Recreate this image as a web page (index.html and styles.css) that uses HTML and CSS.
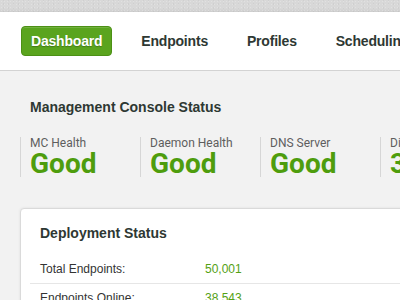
FILE: index.html
```html
<!DOCTYPE html>
<html>
<head>
<meta charset="utf-8">
<link rel="stylesheet" href="styles.css">
</head>
<body>
<div class="page">
  <div class="topband"></div>
  <nav class="nav">
    <a class="nav-item active">Dashboard</a>
    <a class="nav-item">Endpoints</a>
    <a class="nav-item">Profiles</a>
    <a class="nav-item">Scheduling</a>
    <a class="nav-item">Reports</a>
  </nav>
  <main class="main">
    <h2 class="section-title">Management Console Status</h2>
    <div class="stats">
      <div class="stat"><div class="stat-label">MC Health</div><div class="stat-value">Good</div></div>
      <div class="stat"><div class="stat-label">Daemon Health</div><div class="stat-value">Good</div></div>
      <div class="stat"><div class="stat-label">DNS Server</div><div class="stat-value">Good</div></div>
      <div class="stat"><div class="stat-label">Disk Usage</div><div class="stat-value">34%</div></div>
    </div>
    <section class="card">
      <h3 class="card-title">Deployment Status</h3>
      <div class="rows">
        <div class="row"><span class="row-label">Total Endpoints:</span><span class="row-value">50,001</span></div>
        <div class="row"><span class="row-label">Endpoints Online:</span><span class="row-value">38,543</span></div>
        <div class="row"><span class="row-label">Endpoints Offline:</span><span class="row-value">11,458</span></div>
      </div>
    </section>
  </main>
</div>
</body>
</html>
```
FILE: styles.css
```css
html, body {
  margin: 0;
  padding: 0;
}
body {
  width: 400px;
  height: 300px;
  overflow: hidden;
  background: #f2f2f2;
  font-family: "Liberation Sans", Arial, sans-serif;
}
.page {
  width: 400px;
  overflow: hidden;
}
.topband {
  height: 12px;
  background-color: #d8d8d8;
  background-image:
    radial-gradient(rgba(255,255,255,0.22) 0.6px, transparent 0.8px),
    radial-gradient(rgba(0,0,0,0.05) 0.6px, transparent 0.8px),
    linear-gradient(to bottom, rgba(0,0,0,0) 70%, rgba(0,0,0,0.05));
  background-size: 3px 3px, 5px 4px, 100% 100%;
  background-position: 0 0, 1px 2px, 0 0;
}
.nav {
  height: 58px;
  background: #ffffff;
  border-bottom: 1px solid #d3d3d3;
  display: flex;
  align-items: center;
  gap: 19px;
  padding-left: 21px;
  white-space: nowrap;
}
.nav-item {
  font-size: 14px;
  font-weight: bold;
  letter-spacing: -0.2px;
  color: #2e3833;
  padding: 0 10px;
  height: 30px;
  line-height: 30px;
  flex: none;
}
.nav-item.active {
  background: #5aa41e;
  border: 1px solid #4c9015;
  border-radius: 4px;
  color: #ffffff;
  height: 28px;
  line-height: 28px;
  padding: 0 9px;
  text-shadow: 0 1px 1px rgba(0,0,0,0.25);
  box-shadow: inset 0 1px 0 rgba(255,255,255,0.15);
}
.main {
  padding: 28px 0 0 20px;
}
.section-title {
  margin: 0 0 21px 10px;
  font-size: 14px;
  line-height: 17px;
  font-weight: bold;
  color: #2e3833;
}
.stats {
  display: flex;
  white-space: nowrap;
}
.stat {
  flex: none;
  width: 110px;
  border-left: 1px solid #d6d6d6;
  padding-left: 9px;
  height: 40px;
}
.stat-label {
  font-family: Roboto, "Liberation Sans", sans-serif;
  font-size: 12px;
  line-height: 13px;
  color: #5e5e5e;
}
.stat-value {
  font-family: Roboto, "Liberation Sans", sans-serif;
  font-weight: bold;
  font-size: 28px;
  line-height: 27px;
  color: #4e9d0d;
}
.card {
  margin-top: 31px;
  width: 520px;
  background: #ffffff;
  border: 1px solid #dadada;
  border-radius: 4px;
  box-shadow: 0 0 3px rgba(0,0,0,0.08);
  padding: 16px 0 20px 0;
}
.card-title {
  margin: 0 0 13px 19px;
  font-size: 14px;
  line-height: 17px;
  font-weight: bold;
  color: #2e3833;
}
.rows {
  margin-left: 9px;
}
.row {
  display: flex;
  height: 28px;
  line-height: 28px;
  border-bottom: 1px solid #e6e6e6;
  padding-left: 10px;
  font-size: 12px;
}
.row-label {
  width: 165px;
  color: #333333;
}
.row-value {
  color: #54a114;
}
```
